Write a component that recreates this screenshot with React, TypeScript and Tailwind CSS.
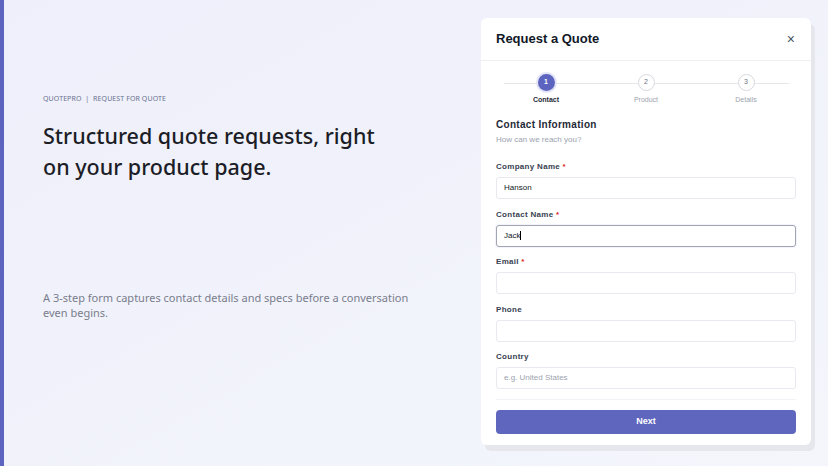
import React from "react";

const Field = ({
  label,
  required,
  value,
  placeholder,
  focused,
}: {
  label: string;
  required?: boolean;
  value?: string;
  placeholder?: string;
  focused?: boolean;
}) => (
  <div className="flex flex-col">
    <div className="text-[8px] leading-[10px] font-bold text-[#374151] tracking-[0.3px]">
      {label}
      {required && <span className="text-[#dc2626]"> *</span>}
    </div>
    <div
      className={
        "mt-[5px] h-[22px] rounded-[3px] flex items-center px-[7px] text-[8px] bg-white " +
        (focused
          ? "border border-[#a1a5b0] shadow-[0_0_0_1px_rgba(99,102,241,0.08)]"
          : "border border-[#e8e9ee]")
      }
    >
      {value ? (
        <span className="text-[#111827]">
          {value}
          {focused && <span className="inline-block w-[1px] h-[9px] bg-black align-middle" />}
        </span>
      ) : (
        <span className="text-[#9ca3af]">{placeholder}</span>
      )}
    </div>
  </div>
);

export default function App() {
  return (
    <div
      className="w-[828px] h-[466px] flex overflow-hidden bg-gradient-to-br from-[#eeeffa] to-[#f4f6fc]"
      style={{ fontFamily: '"Liberation Sans", Arial, sans-serif' }}
    >
      <div className="w-[4px] bg-[#5c64c0] shrink-0" />
      <div className="flex-1 pl-[39px] pt-[94px]" style={{ fontFamily: '"Noto Sans", "Open Sans", sans-serif' }}>
        <div className="text-[7px] leading-[9px] text-[#6b7190] tracking-[0.1px]">
          QUOTEPRO&nbsp; |&nbsp; REQUEST FOR QUOTE
        </div>
        <h1 className="mt-[17px] text-[21.5px] leading-[31px] font-medium text-[#1c1d26] w-[350px]">
          Structured quote requests, right on your product page.
        </h1>
        <p className="mt-[108px] text-[11px] leading-[15px] text-[#7a7d8c] w-[380px]">
          A 3-step form captures contact details and specs before a conversation even begins.
        </p>
      </div>
      <div className="pt-[18px] pr-[17px] shrink-0">
        <div className="w-[330px] h-[427px] bg-white rounded-[6px] shadow-[4px_6px_0_0_#e6e7ec] flex flex-col">
          <div className="h-[43px] shrink-0 flex items-center justify-between px-[15px] border-b border-[#eeeff3]">
            <span className="text-[13px] font-bold text-[#111827]">Request a Quote</span>
            <span className="text-[14px] text-[#4b5563] leading-none pr-[1px]">×</span>
          </div>
          <div className="px-[15px] pt-[13px]">
            <div className="relative flex">
              <div className="absolute left-[8px] right-[7px] top-[9px] h-[1px] bg-[#e5e7eb]" />
              {[
                { n: "1", l: "Contact", a: true },
                { n: "2", l: "Product", a: false },
                { n: "3", l: "Details", a: false },
              ].map((s) => (
                <div key={s.n} className="relative flex-1 flex flex-col items-center">
                  {s.a ? (
                    <div className="w-[17px] h-[17px] rounded-full bg-[#5c64c0] ring-2 ring-[#e3e5f6] flex items-center justify-center text-[7px] font-bold text-white">
                      {s.n}
                    </div>
                  ) : (
                    <div className="w-[17px] h-[17px] rounded-full bg-white border border-[#d7d9df] flex items-center justify-center text-[7px] text-[#6b7280]">
                      {s.n}
                    </div>
                  )}
                  <div
                    className={
                      "mt-[4px] text-[7px] leading-[9px] " +
                      (s.a ? "font-bold text-[#1f2937]" : "text-[#9ca3af]")
                    }
                  >
                    {s.l}
                  </div>
                </div>
              ))}
            </div>
            <div className="mt-[15px] text-[10px] leading-[12px] font-bold text-[#1f2937] tracking-[0.3px]">
              Contact Information
            </div>
            <div className="mt-[4px] text-[8px] leading-[10px] text-[#9ca3af]">How can we reach you?</div>
            <div className="mt-[17px] flex flex-col gap-[10.5px]">
              <Field label="Company Name" required value="Hanson" />
              <Field label="Contact Name" required value="Jack" focused />
              <Field label="Email" required />
              <Field label="Phone" />
              <Field label="Country" placeholder="e.g. United States" />
            </div>
          </div>
          <div className="mt-[10px] mx-[15px] border-t border-[#f1f2f5] pt-[10px]">
            <div className="h-[24px] rounded-[4px] bg-[#5f66be] flex items-center justify-center text-[9px] font-bold text-white">
              Next
            </div>
          </div>
        </div>
      </div>
    </div>
  );
}
